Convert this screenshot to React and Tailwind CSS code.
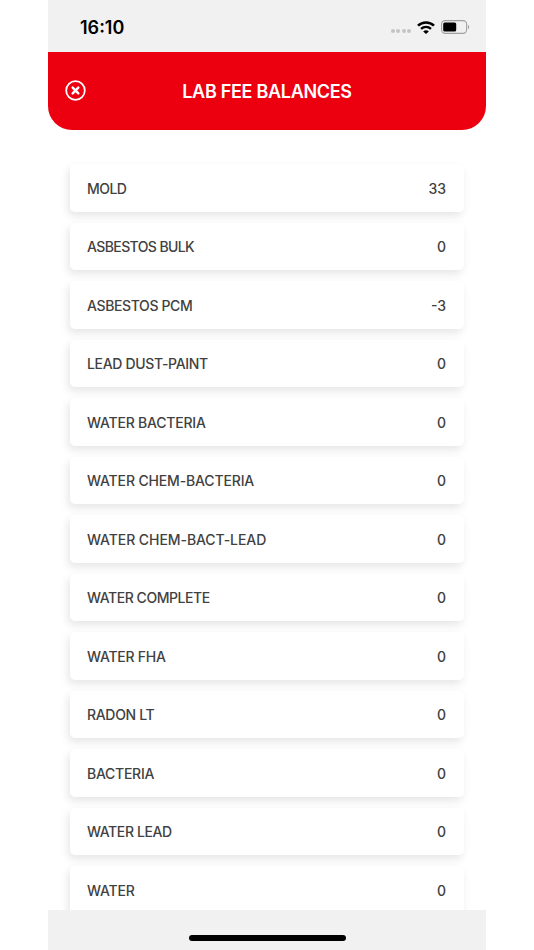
const balances = [
  { name: 'MOLD', value: '33', tracking: 'tracking-[-0.55px]' },
  { name: 'ASBESTOS BULK', value: '0', tracking: 'tracking-[-0.6px]' },
  { name: 'ASBESTOS PCM', value: '-3', tracking: 'tracking-[-0.37px]' },
  { name: 'LEAD DUST-PAINT', value: '0', tracking: 'tracking-[-0.32px]' },
  { name: 'WATER BACTERIA', value: '0', tracking: 'tracking-[-0.21px]' },
  { name: 'WATER CHEM-BACTERIA', value: '0', tracking: 'tracking-[-0.15px]' },
  { name: 'WATER CHEM-BACT-LEAD', value: '0', tracking: 'tracking-[-0.07px]' },
  { name: 'WATER COMPLETE', value: '0', tracking: 'tracking-[-0.45px]' },
  { name: 'WATER FHA', value: '0', tracking: 'tracking-[-0.25px]' },
  { name: 'RADON LT', value: '0', tracking: 'tracking-[-0.32px]' },
  { name: 'BACTERIA', value: '0', tracking: 'tracking-[-0.27px]' },
  { name: 'WATER LEAD', value: '0', tracking: 'tracking-[-0.4px]' },
  { name: 'WATER', value: '0', tracking: 'tracking-[-0.2px]' },
];

function StatusBar() {
  return (
    <div className="h-[51.5px] shrink-0 bg-[#f1f1f1] flex items-center justify-between pl-[32px] pr-[16px] pt-[3px]">
      <span className="text-[18px] leading-none font-semibold text-black pt-[2px]">16:10</span>
      <div className="flex items-center">
        <div className="flex gap-[1.4px] pt-[8px] mr-[6px]">
          <span className="w-[4px] h-[4px] rounded-full bg-[#c4c4c4]" />
          <span className="w-[4px] h-[4px] rounded-full bg-[#c4c4c4]" />
          <span className="w-[4px] h-[4px] rounded-full bg-[#c4c4c4]" />
          <span className="w-[4px] h-[4px] rounded-full bg-[#c4c4c4]" />
        </div>
        <svg className="w-[18px] h-[13px] mr-[6px]" viewBox="0 0 18 13" fill="none" stroke="#000">
          <path d="M1 4.6C5.5 .4 12.5 .4 17 4.6" strokeWidth="2.6" />
          <path d="M4 7.8C7 5.2 11 5.2 14 7.8" strokeWidth="2.4" />
          <path d="M9 13L6.2 10.4C7.9 9 10.1 9 11.8 10.4Z" fill="#000" stroke="none" />
        </svg>
        <svg className="w-[29px] h-[14px]" viewBox="0 0 29 14" fill="none">
          <rect x=".6" y=".6" width="25" height="12.8" rx="3.6" stroke="#a0a0a0" strokeWidth="1.1" />
          <rect x="2.2" y="2.5" width="13" height="9" rx="1.6" fill="#000" />
          <path d="M27 4.8C28.7 5.5 28.7 8.5 27 9.2Z" fill="#a0a0a0" />
        </svg>
      </div>
    </div>
  );
}

function Header() {
  return (
    <div className="h-[78.5px] shrink-0 bg-[#ec0010] rounded-b-[24px] grid grid-cols-[56px_1fr_56px] items-center">
      <button className="pl-[17px]" aria-label="Close">
        <svg className="w-[21px] h-[21px]" viewBox="0 0 21 21" fill="none" stroke="#fff">
          <circle cx="10.5" cy="10.5" r="9.3" strokeWidth="1.8" />
          <path d="M7.7 7.7L13.3 13.3M13.3 7.7L7.7 13.3" strokeWidth="2.5" strokeLinecap="round" />
        </svg>
      </button>
      <h1 className="text-center text-[18px] leading-none font-semibold text-white whitespace-nowrap tracking-[-0.3px] pt-[2px]">
        LAB FEE BALANCES
      </h1>
    </div>
  );
}

function BalanceRow({ name, value, tracking }) {
  return (
    <div className="h-[47.5px] shrink-0 bg-white rounded-[5px] shadow-[-2px_4px_8px_rgba(0,0,0,0.1)] flex items-center justify-between pt-[1.2px] pl-[17px] pr-[18px] text-[14px] leading-none font-medium text-[#414141]">
      <span className={tracking}>{name}</span>
      <span>{value}</span>
    </div>
  );
}

function App() {
  return (
    <div className="h-[950px] bg-white flex justify-center overflow-hidden font-['Inter',sans-serif]">
      <div className="w-[438px] h-full flex flex-col">
        <StatusBar />
        <Header />

        {/* Balances list */}
        <div className="flex-1 min-h-0 overflow-hidden pt-[34.2px] pl-[22px] pr-[22px] flex flex-col gap-[11px]">
          {balances.map(b => (
            <BalanceRow key={b.name} {...b} />
          ))}
        </div>

        {/* Home indicator */}
        <div className="h-[40px] shrink-0 bg-[#f1f1f1] flex justify-center pt-[24.5px]">
          <div className="w-[157px] h-[6px] rounded-full bg-black" />
        </div>
      </div>
    </div>
  );
}

export default App;
